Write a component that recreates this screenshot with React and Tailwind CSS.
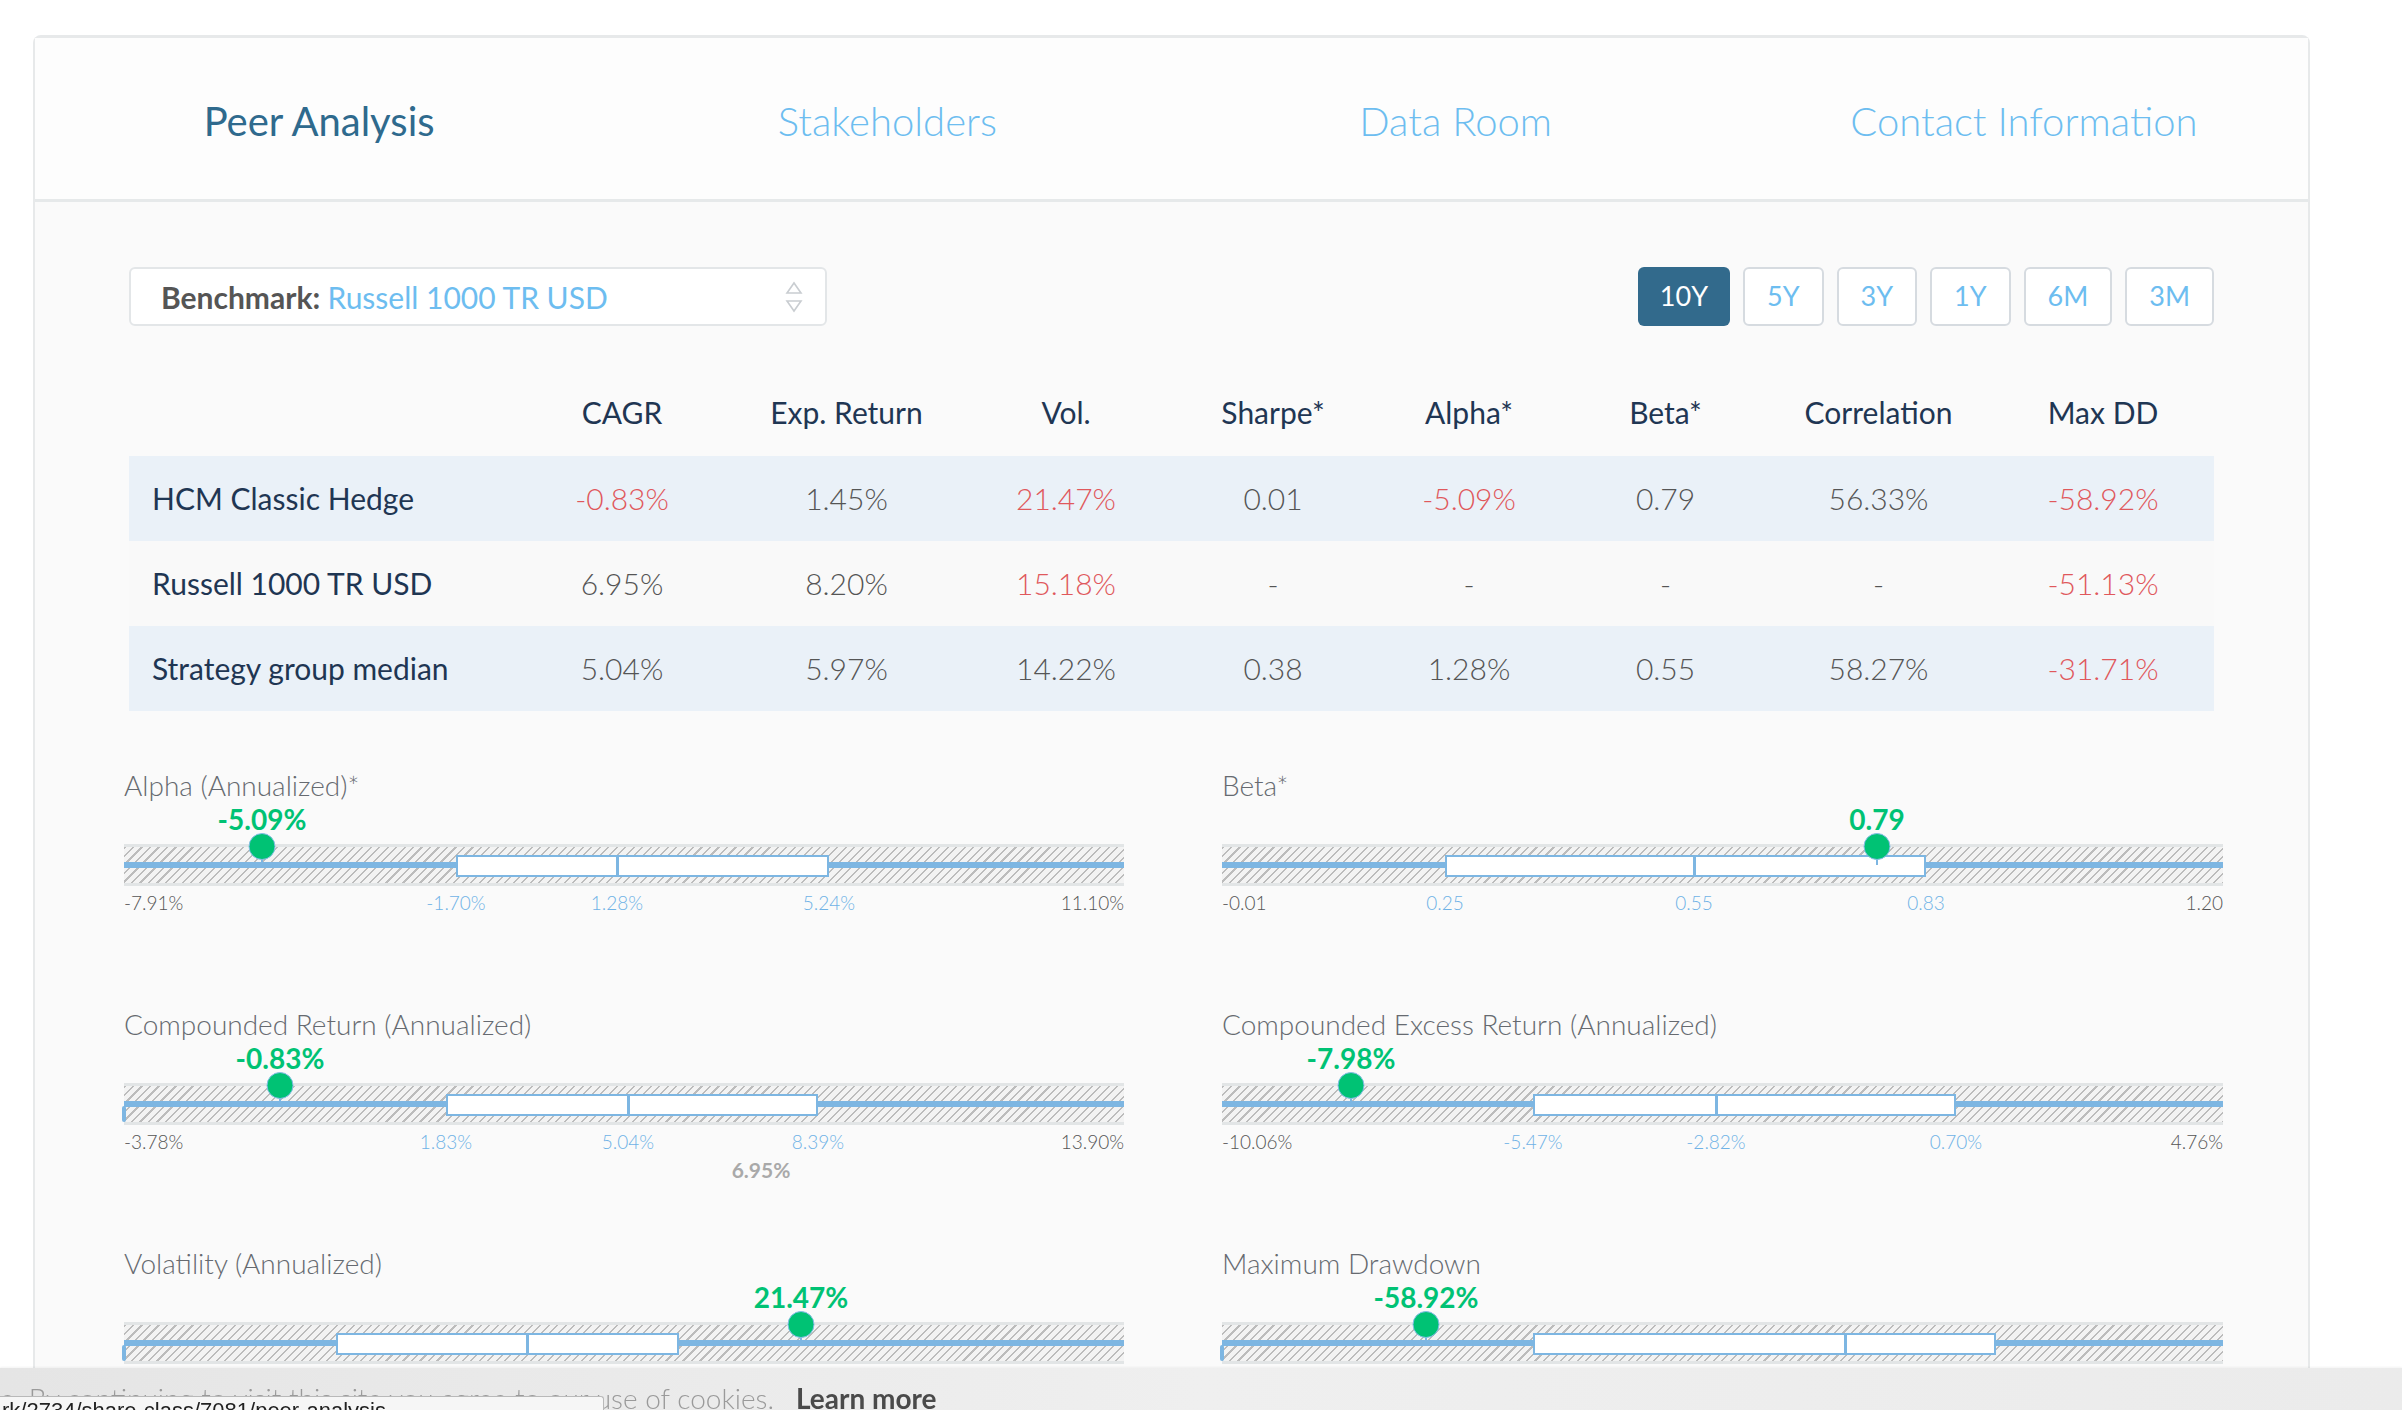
import React from 'react'

const tabs = ['Peer Analysis', 'Stakeholders', 'Data Room', 'Contact Information']
const periods = ['10Y', '5Y', '3Y', '1Y', '6M', '3M']
const headers = ['CAGR', 'Exp. Return', 'Vol.', 'Sharpe*', 'Alpha*', 'Beta*', 'Correlation', 'Max DD']

const rows = [
  {
    name: 'HCM Classic Hedge',
    bg: 'bg-[#eaf1f8]',
    vals: [['-0.83%', 1], ['1.45%'], ['21.47%', 1], ['0.01'], ['-5.09%', 1], ['0.79'], ['56.33%'], ['-58.92%', 1]],
  },
  {
    name: 'Russell 1000 TR USD',
    bg: 'bg-[#f9f9f9]',
    vals: [['6.95%'], ['8.20%'], ['15.18%', 1], ['-'], ['-'], ['-'], ['-'], ['-51.13%', 1]],
  },
  {
    name: 'Strategy group median',
    bg: 'bg-[#eaf1f8]',
    vals: [['5.04%'], ['5.97%'], ['14.22%'], ['0.38'], ['1.28%'], ['0.55'], ['58.27%'], ['-31.71%', 1]],
  },
]

// positions are px from the left of the track
const charts = [
  {
    title: 'Alpha (Annualized)*', value: '-5.09%', dot: 138, box: 332, med: 493, end: 705,
    min: '-7.91%', max: '11.10%', q: ['-1.70%', '1.28%', '5.24%'],
  },
  {
    title: 'Beta*', value: '0.79', dot: 655, box: 223, med: 472, end: 704,
    min: '-0.01', max: '1.20', q: ['0.25', '0.55', '0.83'],
  },
  {
    title: 'Compounded Return (Annualized)', value: '-0.83%', dot: 156, box: 322, med: 504, end: 694,
    min: '-3.78%', max: '13.90%', q: ['1.83%', '5.04%', '8.39%'], marker: true, bench: { label: '6.95%', x: 637 },
  },
  {
    title: 'Compounded Excess Return (Annualized)', value: '-7.98%', dot: 129, box: 311, med: 494, end: 734,
    min: '-10.06%', max: '4.76%', q: ['-5.47%', '-2.82%', '0.70%'],
  },
  {
    title: 'Volatility (Annualized)', value: '21.47%', dot: 677, box: 212, med: 403, end: 555,
    min: '', max: '', q: [], marker: true,
  },
  {
    title: 'Maximum Drawdown', value: '-58.92%', dot: 204, box: 311, med: 623, end: 774,
    min: '', max: '', q: [], marker: true,
  },
]

const light = "font-['Lato_Light',Lato,sans-serif] font-light"

function Track({ c }) {
  return (
    <div className="relative h-[42px] border-y-[3px] border-[#e2e5e6] bg-[repeating-linear-gradient(135deg,#bcbcbc_0px,#bcbcbc_1.5px,#f3f3f3_1.5px,#f3f3f3_6px)]">
      <div className="absolute left-0 right-0 top-[15px] h-[6px] bg-[#7db6e2]" />
      <div
        className="absolute top-[8px] h-[22px] border-2 border-[#7db6e2] bg-white"
        style={{ left: c.box, width: c.end - c.box }}
      />
      <div className="absolute top-[8px] h-[22px] w-[3px] bg-[#7db6e2]" style={{ left: c.med - 1 }} />
      {c.marker && <div className="absolute left-[-2px] top-[20px] h-[16px] w-[4px] rounded-full bg-[#7db6e2]" />}
      <div className="absolute top-[-1px] h-[19px] w-[2px] bg-[#7db6e2]" style={{ left: c.dot - 1 }} />
      <div
        className="absolute top-[-14px] h-[27px] w-[27px] -translate-x-1/2 rounded-full border-[1.5px] border-[#86bde6] bg-[#00c274]"
        style={{ left: c.dot }}
      />
      <div
        className="absolute top-[-44px] -translate-x-1/2 whitespace-nowrap text-[28px] font-bold leading-[32px] text-[#00c274]"
        style={{ left: c.dot }}
      >
        {c.value}
      </div>
    </div>
  )
}

function Chart({ c }) {
  const qs = [c.box, c.med, c.end]
  return (
    <div className="h-[239px]">
      <div className={`h-[30px] text-[28px] leading-[30px] text-[#666a70] ${light}`}>{c.title}</div>
      <div className="mt-[44px]">
        <Track c={c} />
      </div>
      <div className={`relative mt-[6px] h-[22px] text-[19px] leading-[22px] ${light}`}>
        <span className="absolute left-0 text-[#555]">{c.min}</span>
        <span className="absolute right-0 text-[#555]">{c.max}</span>
        {c.q.map((t, i) => (
          <span key={i} className="absolute -translate-x-1/2 text-[#6fb2e6]" style={{ left: qs[i] }}>
            {t}
          </span>
        ))}
      </div>
      {c.bench && (
        <div className="relative mt-[4px] h-[26px]">
          <span
            className="absolute -translate-x-1/2 text-[21px] font-bold leading-[26px] text-[#a9a9a9]"
            style={{ left: c.bench.x }}
          >
            {c.bench.label}
          </span>
        </div>
      )}
    </div>
  )
}

export default function App() {
  return (
    <div className="min-h-screen w-full bg-white font-[Lato,sans-serif] pb-[200px]">
      <div className="ml-[33px] mt-[35px] w-[2277px] rounded-t-[8px] border-x-2 border-t-[3px] border-[#e7e9ea] bg-[#fafafa]">
        {/* tabs */}
        <div className="grid h-[164px] grid-cols-4 items-center border-b-[3px] border-[#e6e9ea] bg-[#fdfdfd] pt-[5px]">
          {tabs.map((t, i) => (
            <div
              key={t}
              className={`text-center text-[40px] leading-[48px] ${
                i === 0 ? 'font-normal text-[#2f6a8d]' : `${light} text-[#6dbdf0]`
              }`}
            >
              {t}
            </div>
          ))}
        </div>

        <div className="px-[94px] pt-[65px]">
          {/* benchmark + periods */}
          <div className="flex items-center justify-between">
            <div className="flex h-[59px] w-[698px] items-center justify-between rounded-[6px] border-2 border-[#e3e6e8] bg-white pl-[30px] pr-[20px]">
              <div className="text-[30px] leading-[34px]">
                <span className="font-bold text-[#555]">Benchmark: </span>
                <span className="text-[#6dbdf0]">Russell 1000 TR USD</span>
              </div>
              <svg width="22" height="36" viewBox="0 0 22 36" fill="none" stroke="#c9cdd1" strokeWidth="1.6">
                <path d="M4 14 L11 4 L18 14 Z" />
                <path d="M4 22 L11 32 L18 22 Z" />
              </svg>
            </div>
            <div className="flex gap-[13px]">
              {periods.map((p, i) => (
                <div
                  key={p}
                  className={`flex h-[59px] items-center rounded-[6px] px-[22px] text-[27px] ${
                    i === 0
                      ? 'bg-[#326a8c] text-white'
                      : 'border-2 border-[#d6dbe0] bg-white text-[#6dbdf0]'
                  }`}
                >
                  {p}
                </div>
              ))}
            </div>
          </div>

          {/* table */}
          <div className="mt-[42px] text-[30px]">
            <div className="grid h-[88px] grid-cols-[381px_224px_225px_214px_200px_192px_201px_225px_224px] items-center text-[#1f3653]">
              <div />
              {headers.map((h) => (
                <div key={h} className="text-center">{h}</div>
              ))}
            </div>
            {rows.map((r) => (
              <div
                key={r.name}
                className={`grid h-[85px] grid-cols-[381px_224px_225px_214px_200px_192px_201px_225px_224px] items-center ${r.bg}`}
              >
                <div className="pl-[23px] text-[#1f3653]">{r.name}</div>
                {r.vals.map(([v, red], i) => (
                  <div key={i} className={`text-center ${light} ${red ? 'text-[#e0585c]' : 'text-[#555]'}`}>
                    {v}
                  </div>
                ))}
              </div>
            ))}
          </div>

          {/* box plots */}
          <div className="ml-[-5px] mt-[59px] grid grid-cols-[1000px_1001px] gap-x-[98px]">
            {charts.map((c) => (
              <Chart key={c.title} c={c} />
            ))}
          </div>
        </div>
      </div>

      {/* cookie bar */}
      <div className="fixed bottom-0 left-0 right-0 h-[42px] bg-gradient-to-r from-[#e5e5e5] via-[#efefef] to-[#ebebeb] shadow-[0_-1px_2px_rgba(0,0,0,0.05)]">
        <div className="flex whitespace-nowrap pt-[14px] text-[28px] leading-[32px]">
          <div className={`flex w-[774px] shrink-0 justify-end overflow-hidden text-[#9a9a9a] ${light}`}>
            <span className="shrink-0">
              We use cookies to ensure you get the best experience. By continuing to visit this site you agree to our use of cookies.
            </span>
          </div>
          <div className="ml-[22px] font-bold text-[#4a4a4a]">Learn more</div>
        </div>
      </div>
      <div className="fixed bottom-0 left-0 h-[14px] w-[604px] overflow-hidden rounded-tr-[3px] border-r border-t border-[#b9b9b9] bg-[#f6f6f6]">
        <div className="whitespace-nowrap pl-[2px] pt-[2px] font-[Liberation_Sans,sans-serif] text-[22px] leading-[24px] text-[#222]">
          rk/2734/share-class/7081/peer-analysis
        </div>
      </div>
    </div>
  )
}
